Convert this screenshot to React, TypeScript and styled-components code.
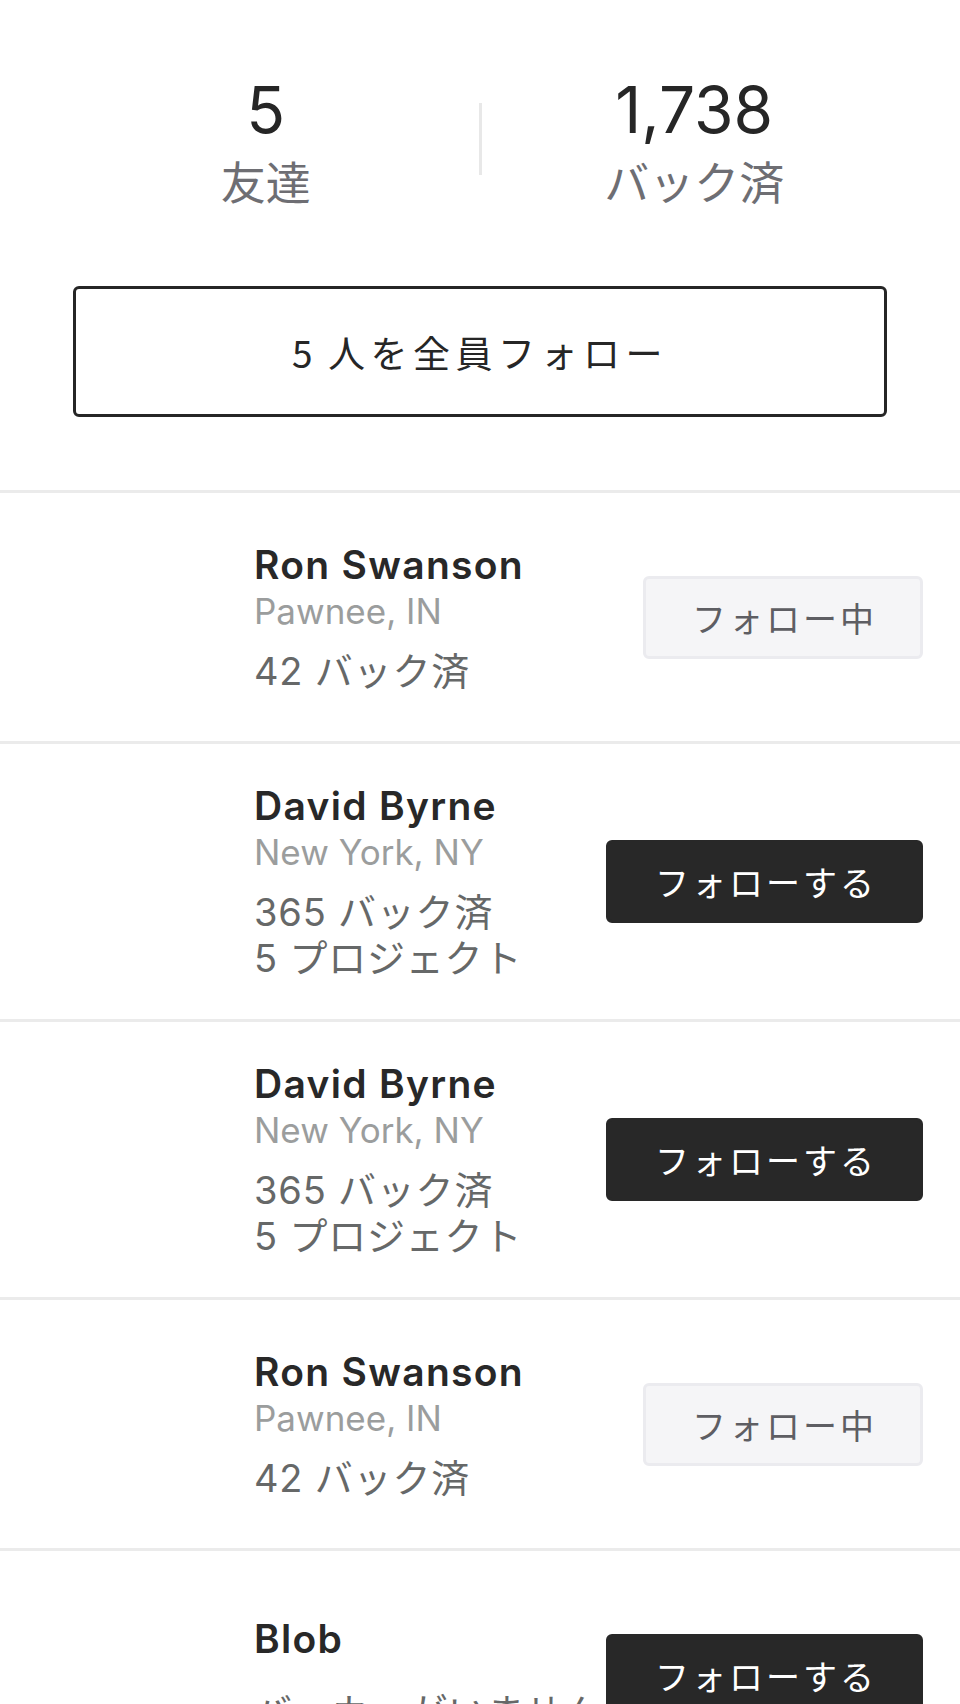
import React from "react";
import styled, { createGlobalStyle } from "styled-components";

const Global = createGlobalStyle`
  html, body { margin: 0; padding: 0; background: #ffffff; }
  body {
    font-family: Inter, "Noto Sans CJK JP", sans-serif;
    -webkit-font-smoothing: antialiased;
  }
  * { box-sizing: border-box; }
`;

const Page = styled.div`
  width: 960px;
  background: #fff;
`;

const Summary = styled.section`
  display: flex;
  align-items: center;
  justify-content: center;
  padding: 71px 53px 0;
`;

const Stat = styled.div`
  flex: 1;
  display: flex;
  flex-direction: column;
  align-items: center;
`;

const StatNumber = styled.div`
  font-family: Inter, "Noto Sans CJK JP", sans-serif;
  font-size: 64px;
  line-height: 77px;
  font-weight: 400;
  color: #262626;
`;

const StatLabel = styled.div`
  font-family: "Noto Sans CJK JP", sans-serif;
  font-size: 45px;
  line-height: 52px;
  color: #6e6e73;
  margin-top: 7px;
`;

const VDivider = styled.div`
  width: 3px;
  height: 72px;
  background: #e8e8e8;
  flex: none;
`;

const FollowAll = styled.button`
  display: block;
  width: calc(100% - 146px);
  margin: 79px 73px 73px;
  height: 131px;
  border: 3px solid #262626;
  border-radius: 6px;
  background: #fff;
  font-family: "Noto Sans CJK JP", Inter, sans-serif;
  font-size: 37px;
  letter-spacing: 5.5px;
  word-spacing: -4px;
  color: #262626;
`;

const List = styled.ul`
  list-style: none;
  margin: 0;
  padding: 0;
`;

const Row = styled.li`
  display: flex;
  align-items: center;
  min-height: 251px;
  border-top: 3px solid #ebebeb;
  padding: 38px 37px 38px 254px;
`;

const Info = styled.div`
  flex: 1;
  min-width: 0;
`;

const Name = styled.div`
  font-family: Inter, "Noto Sans CJK JP", sans-serif;
  font-size: 39px;
  line-height: 47px;
  font-weight: 600;
  letter-spacing: 1.3px;
  color: #282828;
`;

const Location = styled.div`
  font-family: Inter, "Noto Sans CJK JP", sans-serif;
  font-size: 35px;
  line-height: 47px;
  color: #9b9d9d;
`;

const Stats = styled.div<{ $note?: boolean }>`
  margin-top: ${(p) => (p.$note ? "27px" : "13px")};
  padding-bottom: ${(p) => (p.$note ? "0" : "0")};
  font-family: Inter, "Noto Sans CJK JP", sans-serif;
  font-size: 38px;
  line-height: 46px;
  letter-spacing: 0.8px;
  color: #666868;
`;

const FollowButton = styled.button<{ $following: boolean }>`
  flex: none;
  height: 83px;
  padding: 0 43px 0 46px;
  border-radius: 6px;
  font-family: "Noto Sans CJK JP", sans-serif;
  font-size: 34px;
  letter-spacing: 3px;
  border: 3px solid ${(p) => (p.$following ? "#ebebef" : "#282828")};
  background: ${(p) => (p.$following ? "#f5f5f7" : "#282828")};
  color: ${(p) => (p.$following ? "#5e5e63" : "#ffffff")};
`;

type Friend = {
  name: string;
  location?: string;
  stats: string[];
  following: boolean;
};

const friends: Friend[] = [
  { name: "Ron Swanson", location: "Pawnee, IN", stats: ["42 バック済"], following: true },
  { name: "David Byrne", location: "New York, NY", stats: ["365 バック済", "5 プロジェクト"], following: false },
  { name: "David Byrne", location: "New York, NY", stats: ["365 バック済", "5 プロジェクト"], following: false },
  { name: "Ron Swanson", location: "Pawnee, IN", stats: ["42 バック済"], following: true },
  { name: "Blob", stats: ["バッカーがいません"], following: false },
];

export default function App() {
  return (
    <Page>
      <Global />
      <Summary>
        <Stat>
          <StatNumber>5</StatNumber>
          <StatLabel>友達</StatLabel>
        </Stat>
        <VDivider />
        <Stat>
          <StatNumber>1,738</StatNumber>
          <StatLabel>バック済</StatLabel>
        </Stat>
      </Summary>
      <FollowAll>5 人を全員フォロー</FollowAll>
      <List>
        {friends.map((f, i) => (
          <Row key={i}>
            <Info>
              <Name>{f.name}</Name>
              {f.location && <Location>{f.location}</Location>}
              <Stats $note={!f.location}>
                {f.stats.map((s, j) => (
                  <div key={j}>{s}</div>
                ))}
              </Stats>
            </Info>
            <FollowButton $following={f.following}>
              {f.following ? "フォロー中" : "フォローする"}
            </FollowButton>
          </Row>
        ))}
      </List>
    </Page>
  );
}
